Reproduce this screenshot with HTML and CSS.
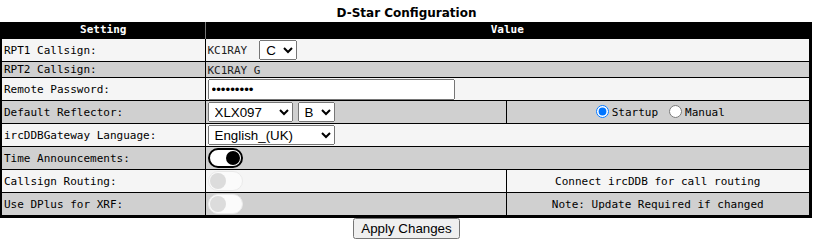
FILE: index.html
```html
<!DOCTYPE html>
<html>
<head>
<meta charset="utf-8">
<title>D-Star Configuration</title>
<link rel="stylesheet" href="styles.css">
</head>
<body>
<div class="title">D-Star Configuration</div>
<table class="config">
  <colgroup>
    <col class="c1">
    <col class="c2">
    <col class="c3">
  </colgroup>
  <thead>
    <tr>
      <th class="th-set">Setting</th>
      <th colspan="2">Value</th>
    </tr>
  </thead>
  <tbody>
    <tr class="light tall">
      <td>RPT1 Callsign:</td>
      <td colspan="2"><span class="call">KC1RAY</span><select class="sel sel-c"><option>C</option></select></td>
    </tr>
    <tr class="dark short">
      <td>RPT2 Callsign:</td>
      <td colspan="2"><span class="call">KC1RAY G</span></td>
    </tr>
    <tr class="light tall">
      <td>Remote Password:</td>
      <td colspan="2"><input class="pw" type="password" value="abcdefghi"></td>
    </tr>
    <tr class="dark tall">
      <td>Default Reflector:</td>
      <td><select class="sel sel-ref"><option>XLX097</option></select><select class="sel sel-mod"><option>B</option></select></td>
      <td class="center"><label class="radio"><input type="radio" name="lnk" checked>Startup</label><label class="radio"><input type="radio" name="lnk">Manual</label></td>
    </tr>
    <tr class="light tall">
      <td>ircDDBGateway Language:</td>
      <td colspan="2"><select class="sel sel-lang"><option>English_(UK)</option></select></td>
    </tr>
    <tr class="dark tall">
      <td>Time Announcements:</td>
      <td colspan="2"><span class="toggle on"><span class="knob"></span></span></td>
    </tr>
    <tr class="light tall">
      <td>Callsign Routing:</td>
      <td><span class="toggle off"><span class="knob"></span></span></td>
      <td class="center">Connect ircDDB for call routing</td>
    </tr>
    <tr class="dark tall">
      <td>Use DPlus for XRF:</td>
      <td><span class="toggle off"><span class="knob"></span></span></td>
      <td class="center">Note: Update Required if changed</td>
    </tr>
  </tbody>
</table>
<div class="actions"><button type="button" class="apply">Apply Changes</button></div>
</body>
</html>
```
FILE: styles.css
```css
html, body {
  margin: 0;
  padding: 0;
  background: #fff;
}
body {
  width: 813px;
  font-family: "DejaVu Sans Mono", "Liberation Mono", monospace;
  font-size: 11px;
  color: #000;
}
.title {
  text-align: center;
  font-family: "DejaVu Sans", Verdana, sans-serif;
  font-weight: bold;
  font-size: 12px;
  line-height: 14px;
  padding-top: 6px;
  height: 16px;
}
.config {
  width: 812px;
  border-collapse: collapse;
  border-left: 2px solid #000;
  border-right: 3px solid #000;
  border-bottom: 3px solid #000;
  table-layout: fixed;
}
.c1 { width: 204px; }
.c2 { width: 301px; }
th {
  background: #000;
  color: #fff;
  font-weight: bold;
  height: 16px;
  padding: 0;
  text-align: center;
  line-height: 14px;
}
.th-set {
  border-right: 1px solid #777;
}
td {
  border: 1px solid #000;
  padding: 0 2px;
  white-space: nowrap;
  vertical-align: middle;
}
.light td { background: #f5f5f5; }
.dark td { background: #d0d0d0; }
.tall td { height: 22px; }
.short td { height: 15px; }
.center { text-align: center; }
.call {
  color: #222;
  vertical-align: middle;
}
.sel {
  font-family: "Liberation Sans", Arial, sans-serif;
  font-size: 13.333px;
  height: 20px;
  vertical-align: middle;
  margin: 0;
  padding: 0 0 0 2px;
  box-sizing: border-box;
}
.sel-c { width: 38px; margin-left: 12px; }
.sel-ref { width: 85px; }
.sel-mod { width: 37px; margin-left: 5px; }
.sel-lang { width: 127px; }
.pw {
  width: 247px;
  height: 21px;
  box-sizing: border-box;
  margin: 0;
  vertical-align: middle;
  font-family: "Liberation Sans", Arial, sans-serif;
  font-size: 13.333px;
}
.radio {
  display: inline-flex;
  align-items: center;
  padding-top: 2px;
}
.radio + .radio {
  margin-left: 6px;
}
.radio input {
  margin: 0 3px 2px 5px;
  width: 13px;
  height: 13px;
}
.toggle {
  display: flex;
  align-items: center;
  width: 35px;
  height: 20px;
  box-sizing: border-box;
  border-radius: 10px;
  padding: 1px;
}
.toggle.on {
  background: #fff;
  border: 2px solid #000;
  justify-content: flex-end;
}
.toggle.on .knob {
  width: 14px;
  height: 14px;
  border-radius: 50%;
  background: #000;
}
.toggle.off {
  background: #fbfbfb;
  border: 1px solid #eaeaea;
  justify-content: flex-start;
}
.toggle.off .knob {
  width: 16px;
  height: 16px;
  border-radius: 50%;
  background: #dcdcdc;
}
.actions {
  display: flex;
  justify-content: center;
}
.apply {
  font-family: "Liberation Sans", Arial, sans-serif;
  font-size: 13.333px;
  height: 21px;
  padding: 1px 6px;
  margin: 0;
}
```
